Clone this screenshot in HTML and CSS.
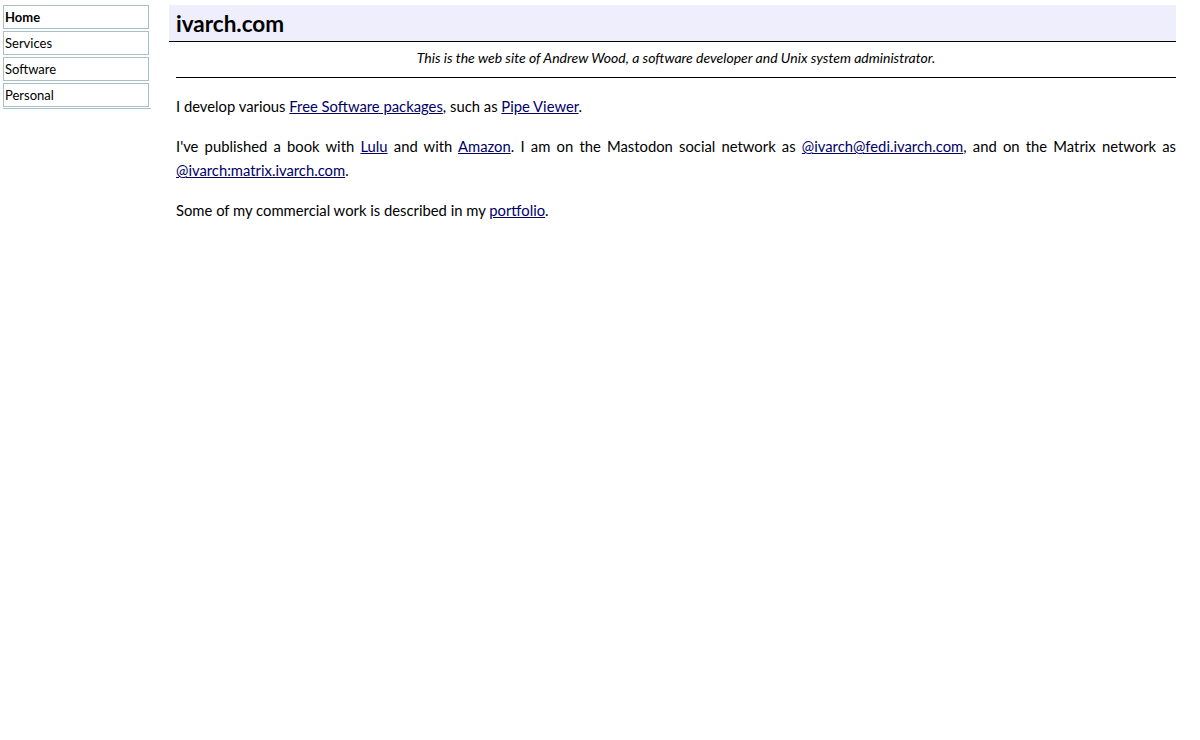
FILE: index.html
```html
<!DOCTYPE html>
<html lang="en">
<head>
  <meta charset="UTF-8">
  <title>ivarch.com</title>
  <link rel="stylesheet" href="styles.css">
</head>
<body>
  <div class="page">
    <div class="nav">
      <a class="navitem current" href="#">Home</a>
      <a class="navitem" href="#">Services</a>
      <a class="navitem" href="#">Software</a>
      <a class="navitem" href="#">Personal</a>
    </div>

    <div class="main">
      <h1>ivarch.com</h1>
      <p class="tagline">This is the web site of Andrew Wood, a software developer and Unix system administrator.</p>
      <hr>
      <div class="content">
        <p>I develop various <a href="#">Free Software packages</a>, such as <a href="#">Pipe Viewer</a>.</p>
        <p>I've published a book with <a href="#">Lulu</a> and with <a href="#">Amazon</a>. I am on the Mastodon social network as <a href="#">@ivarch@fedi.ivarch.com</a>, and on the Matrix network as <a href="#">@ivarch:matrix.ivarch.com</a>.</p>
        <p>Some of my commercial work is described in my <a href="#">portfolio</a>.</p>
      </div>
    </div>
  </div>
</body>
</html>
```

FILE: styles.css
```css
body { margin: 0; padding: 5px 24px 0 3px; background: #fff; color: #000; font-family: Lato, "Open Sans", sans-serif; font-size: 14.8px; }
.page { display: flex; gap: 18px; align-items: flex-start; }

.nav { width: 148px; flex: none; display: flex; flex-direction: column; gap: 2px; border-bottom: 1px solid #a8c0c8; padding-bottom: 1px; }
.navitem {
  display: block;
  width: 142px;
  height: 22px;
  line-height: 22px;
  padding: 0 1px;
  border: 1px solid #a8c0c8;
  color: #000;
  text-decoration: none;
  font-size: 13px;
}
.navitem.current { font-weight: bold; }

.main { flex: 1; }
h1 {
  margin: 0;
  padding: 0 7px;
  height: 36px;
  line-height: 37px;
  background: #eeeefc;
  border-bottom: 1px solid #000;
  font-size: 22.5px;
  font-weight: bold;
}
.tagline { margin: 7px 0 0 7px; text-align: center; font-style: italic; font-size: 14px; line-height: 18px; }
hr { margin: 10px 0 0 7px; border: 0; border-top: 1px solid #000; height: 0; }
.content { padding-left: 7px; }
.content p { margin: 16px 0 0; line-height: 24px; text-align: justify; }
.content a { color: #000066; }
```
